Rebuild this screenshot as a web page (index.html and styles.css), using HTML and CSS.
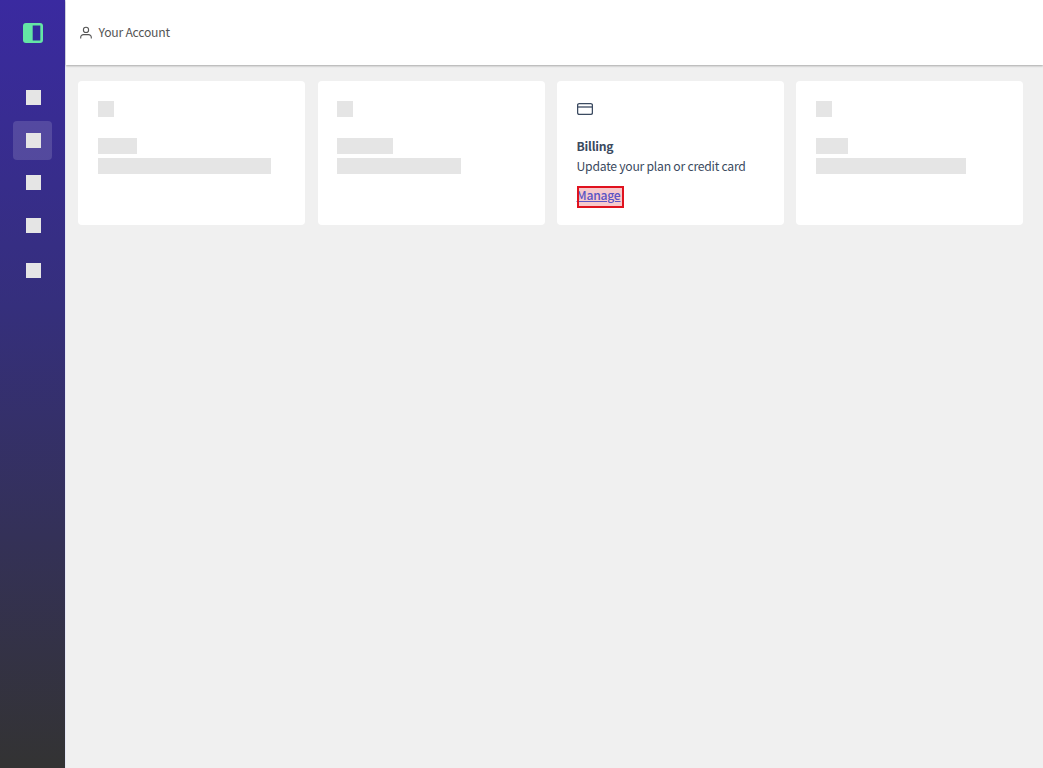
FILE: index.html
```html
<!DOCTYPE html>
<html lang="en">
<head>
  <meta charset="UTF-8">
  <meta name="viewport" content="width=device-width, initial-scale=1.0">
  <title>Your Account</title>
  <link rel="stylesheet" href="styles.css">
</head>
<body>
  <div class="layout">
    <nav class="sidebar">
      <div class="logo">
        <svg width="20" height="20" viewBox="0 0 20 20" aria-hidden="true">
          <rect width="20" height="20" rx="3" fill="#64e6a5"/>
          <rect x="9.7" y="2.5" width="7.6" height="15" fill="#332a9c"/>
        </svg>
      </div>
      <div class="nav-item"><span class="nav-square"></span></div>
      <div class="nav-item active"><span class="nav-square"></span></div>
      <div class="nav-item"><span class="nav-square"></span></div>
      <div class="nav-item"><span class="nav-square"></span></div>
      <div class="nav-item"><span class="nav-square"></span></div>
    </nav>
    <div class="main">
      <header class="topbar">
        <svg class="user-icon" width="14" height="14" viewBox="0 0 14 14" aria-hidden="true">
          <circle cx="7" cy="3.9" r="2.6"/>
          <path d="M1.7 12.6v-1.2a2.8 2.8 0 0 1 2.8-2.8h5a2.8 2.8 0 0 1 2.8 2.8v1.2"/>
        </svg>
        <span>Your Account</span>
      </header>
      <div class="cards">
        <div class="card">
          <div class="ph ph-icon"></div>
          <div class="ph ph-title w-39"></div>
          <div class="ph ph-text w-173"></div>
        </div>
        <div class="card">
          <div class="ph ph-icon"></div>
          <div class="ph ph-title w-56"></div>
          <div class="ph ph-text w-124"></div>
        </div>
        <div class="card">
          <svg class="card-icon" width="16" height="16" viewBox="0 0 16 16" aria-hidden="true">
            <rect x="0.6" y="2.6" width="14.8" height="10.8" rx="1.6"/>
            <path d="M0.6 6h14.8"/>
          </svg>
          <h3 class="card-title">Billing</h3>
          <p class="card-text">Update your plan or credit card</p>
          <a class="card-link" href="#">Manage</a>
        </div>
        <div class="card">
          <div class="ph ph-icon"></div>
          <div class="ph ph-title w-32"></div>
          <div class="ph ph-text w-150"></div>
        </div>
      </div>
    </div>
  </div>
</body>
</html>
```

FILE: styles.css
```css
* {
  box-sizing: border-box;
}
body {
  margin: 0;
  font-family: "Noto Sans CJK SC", "Open Sans", sans-serif;
  background-color: #f0f0f0;
  color: #3b4a60;
}
.layout {
  display: flex;
  min-height: 768px;
}
.sidebar {
  width: 66px;
  flex-shrink: 0;
  display: flex;
  flex-direction: column;
  align-items: center;
  background: linear-gradient(180deg, #3a2aa0 0%, #352f7c 40%, #333333 100%);
  border-right: 1px solid #e4e6f4;
}
.logo {
  height: 65px;
  display: flex;
  align-items: center;
  margin-bottom: 13px;
}
.logo svg {
  display: block;
}
.nav-item {
  width: 39px;
  height: 39px;
  margin-bottom: 3.5px;
  border-radius: 4px;
  display: flex;
  align-items: center;
  justify-content: center;
}
.nav-item:last-child {
  margin-top: 3px;
}
.nav-item.active {
  background-color: rgba(255, 255, 255, 0.14);
}
.nav-square {
  width: 15px;
  height: 15px;
  margin-left: 2px;
  background-color: #e5e5e5;
}
.main {
  flex: 1;
  min-width: 0;
}
.topbar {
  height: 65px;
  display: flex;
  align-items: center;
  gap: 6px;
  padding-left: 12.5px;
  background-color: #ffffff;
  box-shadow: 0 1px 2px rgba(0, 0, 0, 0.3);
  font-size: 12.2px;
  letter-spacing: -0.25px;
  color: #555555;
}
.topbar span {
  margin-bottom: 2px;
}
.user-icon {
  fill: none;
  stroke: #555555;
  stroke-width: 1.1;
}
.cards {
  display: grid;
  grid-template-columns: repeat(4, 227px);
  gap: 12.33px;
  padding: 16px 0 0 12.4px;
}
.card {
  height: 144px;
  padding: 20px 19.5px 0;
  background-color: #ffffff;
  border-radius: 4px;
}
.ph {
  background-color: #e5e5e5;
}
.ph-icon {
  width: 16px;
  height: 16px;
  margin-bottom: 21px;
}
.ph-title {
  height: 16px;
  margin-bottom: 4px;
}
.ph-text {
  height: 16px;
}
.ph-title.w-39 { width: 39px; }
.ph-title.w-56 { width: 56px; }
.ph-title.w-32 { width: 32px; }
.ph-text.w-173 { width: 173px; }
.ph-text.w-124 { width: 124px; }
.ph-text.w-150 { width: 150px; }
.card-icon {
  display: block;
  margin-bottom: 19px;
  fill: none;
  stroke: #3b4a60;
  stroke-width: 1.3;
}
.card-title {
  margin: 0;
  font-size: 12.2px;
  letter-spacing: -0.25px;
  line-height: 20px;
  font-weight: 700;
}
.card-text {
  margin: 0 0 10px;
  font-size: 12.2px;
  letter-spacing: -0.25px;
  line-height: 20px;
}
.card-link {
  display: block;
  width: fit-content;
  padding-right: 3.5px;
  padding-bottom: 4px;
  font-size: 12.2px;
  letter-spacing: -0.25px;
  line-height: 18px;
  font-weight: 500;
  color: #5b54c4;
  background-color: #f6c9cc;
  outline: 2px solid #e0121e;
  outline-offset: -2px;
}
```
